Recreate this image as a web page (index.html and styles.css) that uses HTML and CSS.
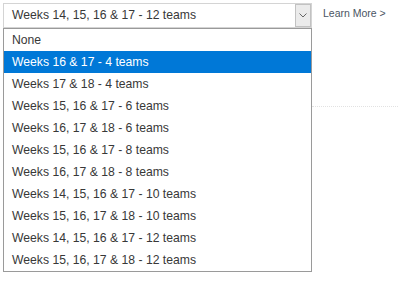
FILE: index.html
```
<!DOCTYPE html>
<html lang="en">
<head>
  <meta charset="UTF-8" />
  <meta name="viewport" content="width=device-width, initial-scale=1" />
  <title>Playoff Format</title>
  <link rel="stylesheet" href="styles.css">
</head>
<body>

  <div class="top">
    <div class="combo">
      <div class="select-box">
        <span class="select-value">Weeks 14, 15, 16 &amp; 17 - 12 teams</span>
        <span class="select-btn">
          <svg width="8" height="5" viewBox="0 0 8 5"><path d="M0.5 0.5 L4 4 L7.5 0.5" fill="none" stroke="#666" stroke-width="1"/></svg>
        </span>
      </div>
      <ul class="options">
        <li>None</li>
        <li class="selected">Weeks 16 &amp; 17 - 4 teams</li>
        <li>Weeks 17 &amp; 18 - 4 teams</li>
        <li>Weeks 15, 16 &amp; 17 - 6 teams</li>
        <li>Weeks 16, 17 &amp; 18 - 6 teams</li>
        <li>Weeks 15, 16 &amp; 17 - 8 teams</li>
        <li>Weeks 16, 17 &amp; 18 - 8 teams</li>
        <li>Weeks 14, 15, 16 &amp; 17 - 10 teams</li>
        <li>Weeks 15, 16, 17 &amp; 18 - 10 teams</li>
        <li>Weeks 14, 15, 16 &amp; 17 - 12 teams</li>
        <li>Weeks 15, 16, 17 &amp; 18 - 12 teams</li>
      </ul>
    </div>
    <div class="side">
      <a class="learn" href="#">Learn More &gt;</a>
      <div class="rule"></div>
    </div>
  </div>

</body>
</html>
```

FILE: styles.css
```
body {
  font-family: "Liberation Sans", Arial, sans-serif;
  margin: 0;
  padding: 3px 0 0 3px;
  background: #fff;
  color: #383838;
}
.top {
  display: flex;
  align-items: flex-start;
}
.combo {
  width: 309px;
}
.select-box {
  display: flex;
  box-sizing: border-box;
  height: 25px;
  border: 1px solid #d4d4d4;
  font-size: 12.2px;
}
.select-value {
  flex: 1;
  padding-left: 8px;
  line-height: 23px;
}
.select-btn {
  box-sizing: border-box;
  width: 16px;
  background: #ebebeb;
  border: 1px solid #c2c2c2;
  display: flex;
  align-items: center;
  justify-content: center;
}
.options {
  list-style: none;
  margin: 0;
  padding: 0;
  background: #fff;
  border: 1px solid #9a9a9a;
  font-size: 12.2px;
}
.options li {
  height: 22px;
  line-height: 22px;
  padding-left: 8px;
}
.options li.selected {
  background: #0078d7;
  color: #fff;
}
.side {
  flex: 1;
  display: flex;
  flex-direction: column;
}
.learn {
  margin-top: 4px;
  padding-left: 11px;
  font-size: 10.5px;
  color: #4a5563;
  text-decoration: none;
}
.rule {
  margin-top: 87px;
  border-top: 1px dotted #e2e2e2;
}
```
